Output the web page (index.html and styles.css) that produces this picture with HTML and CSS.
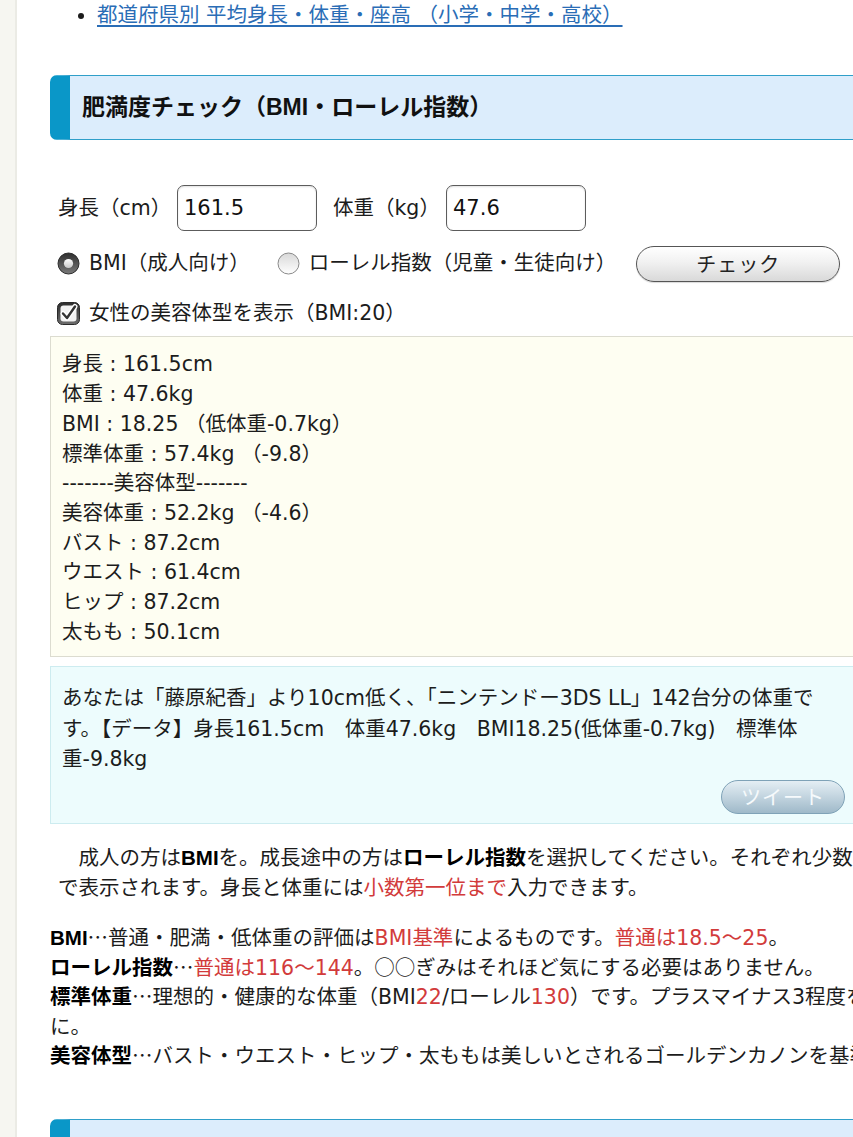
FILE: index.html
```html
<!DOCTYPE html>
<html lang="ja">
<head>
<meta charset="utf-8">
<title>肥満度チェック（BMI・ローレル指数）</title>
<link rel="stylesheet" href="styles.css">
</head>
<body>
<div class="page">
  <div class="side"></div>
  <main class="main">
    <ul class="links">
      <li><a href="#">都道府県別 平均身長・体重・座高 （小学・中学・高校）</a></li>
    </ul>

    <section class="tool">
      <h2 class="heading">肥満度チェック（BMI・ローレル指数）</h2>

      <form class="form">
        <div class="row row-inputs">
          <label class="lbl lbl-h">身長（cm）</label>
          <input class="num num-h" type="text" value="161.5">
          <label class="lbl lbl-w">体重（kg）</label>
          <input class="num" type="text" value="47.6">
        </div>
        <div class="row row-radio">
          <label class="opt opt-bmi">
            <svg class="ico" width="23" height="23" viewBox="0 0 23 23">
              <defs>
                <linearGradient id="rOn" x1="0" y1="0" x2="0" y2="1">
                  <stop offset="0" stop-color="#2e2e2e"/>
                  <stop offset="1" stop-color="#7a7a7a"/>
                </linearGradient>
                <linearGradient id="rDot" x1="0" y1="0" x2="0" y2="1">
                  <stop offset="0" stop-color="#ffffff"/>
                  <stop offset="1" stop-color="#c8c8c8"/>
                </linearGradient>
              </defs>
              <circle cx="11.5" cy="11.5" r="10.5" fill="url(#rOn)" stroke="#2a2a2a" stroke-width="1"/>
              <circle cx="11.5" cy="11.5" r="4.6" fill="url(#rDot)"/>
            </svg>
            BMI（成人向け）
          </label>
          <label class="opt opt-rohrer">
            <svg class="ico" width="23" height="23" viewBox="0 0 23 23">
              <defs>
                <linearGradient id="rOff" x1="0" y1="0" x2="0" y2="1">
                  <stop offset="0" stop-color="#d8d8d8"/>
                  <stop offset="1" stop-color="#ffffff"/>
                </linearGradient>
              </defs>
              <circle cx="11.5" cy="11.5" r="10.5" fill="url(#rOff)" stroke="#8a8a8a" stroke-width="1"/>
            </svg>
            ローレル指数（児童・生徒向け）
          </label>
          <button class="btn-check" type="button">チェック</button>
        </div>
        <div class="row row-check">
          <label class="opt">
            <svg class="ico" width="23" height="23" viewBox="0 0 23 23">
              <defs>
                <linearGradient id="cOn" x1="0" y1="0" x2="0" y2="1">
                  <stop offset="0" stop-color="#2c2c2c"/>
                  <stop offset="1" stop-color="#6e6e6e"/>
                </linearGradient>
              </defs>
              <rect x="0.5" y="0.5" width="22" height="22" rx="5" fill="url(#cOn)" stroke="#2a2a2a"/>
              <rect x="3.5" y="3.5" width="16" height="16" rx="3" fill="#f2f2f2"/>
              <path d="M6 11.5 L10 16 L18 4.5" fill="none" stroke="#ffffff" stroke-width="5" stroke-linecap="round" stroke-linejoin="round"/>
              <path d="M6 11.5 L10 16 L18 4.5" fill="none" stroke="#333333" stroke-width="2.4" stroke-linecap="round" stroke-linejoin="round"/>
            </svg>
            女性の美容体型を表示（BMI:20）
          </label>
        </div>
      </form>

      <div class="result">
        <div>身長 : 161.5cm</div>
        <div>体重 : 47.6kg</div>
        <div>BMI : 18.25 （低体重-0.7kg）</div>
        <div>標準体重 : 57.4kg （-9.8）</div>
        <div>-------美容体型-------</div>
        <div>美容体重 : 52.2kg （-4.6）</div>
        <div>バスト : 87.2cm</div>
        <div>ウエスト : 61.4cm</div>
        <div>ヒップ : 87.2cm</div>
        <div>太もも : 50.1cm</div>
      </div>

      <div class="share">
        <p class="share-text">あなたは「藤原紀香」より10cm低く、「ニンテンドー3DS LL」142台分の体重です。【データ】身長161.5cm　体重47.6kg　BMI18.25(低体重-0.7kg)　標準体重-9.8kg</p>
        <div class="share-actions">
          <button class="btn-tweet" type="button">ツイート</button>
        </div>
      </div>

      <p class="desc">　成人の方は<b>BMI</b>を。成長途中の方は<b>ローレル指数</b>を選択してください。それぞれ少数で表示されます。身長と体重には<span class="red">小数第一位まで</span>入力できます。</p>

      <div class="defs">
        <div><b>BMI</b><span class="cjk">…</span>普通・肥満・低体重の評価は<span class="red">BMI基準</span>によるものです。<span class="red">普通は18.5～25</span>。</div>
        <div><b>ローレル指数</b><span class="cjk">…</span><span class="red">普通は116～144</span>。<span class="cjk">○○</span>ぎみはそれほど気にする必要はありません。</div>
        <div><b>標準体重</b><span class="cjk">…</span>理想的・健康的な体重（BMI<span class="red">22</span>/ローレル<span class="red">130</span>）です。プラスマイナス3程度を目安に。</div>
        <div><b>美容体型</b><span class="cjk">…</span>バスト・ウエスト・ヒップ・太ももは美しいとされるゴールデンカノンを基準に。</div>
      </div>
    </section>

    <h2 class="heading heading-next">&nbsp;</h2>
  </main>
</div>
</body>
</html>
```

FILE: styles.css
```css
html {
  overflow-x: hidden;
}

body {
  margin: 0;
  background: #ffffff;
  color: #1c1c1c;
  font-family: "DejaVu Sans", "Noto Sans CJK JP", sans-serif;
  font-size: 20.5px;
  line-height: 29.7px;
  overflow-x: hidden;
}

.page {
  display: flex;
  align-items: stretch;
  min-height: 1137px;
}

.side {
  flex: 0 0 15px;
  background: #f6f6f1;
  border-right: 2px solid #ebebe5;
}

.main {
  flex: 0 0 870px;
  padding-left: 33px;
  padding-top: 1px;
}

.links {
  margin: 0;
  padding-left: 47px;
}

.links a {
  color: #2a6db6;
  text-decoration: underline;
  text-underline-offset: 3px;
}

.heading {
  margin: 44px 0 0;
  padding: 15px 12px;
  font-family: "Liberation Sans", "Noto Sans CJK JP", sans-serif;
  font-size: 23px;
  line-height: 33px;
  font-weight: bold;
  color: #111111;
  background: #dcedfc;
  border: 1px solid #2f9fc9;
  border-left: 20px solid #0a97c8;
  border-radius: 7px;
}

.form {
  margin: 45px 0 0;
  padding-left: 7px;
  width: 800px;
}

.row {
  display: flex;
  align-items: center;
}

.row-inputs {
  padding-left: 1px;
  height: 46px;
}

.lbl {
  flex: 0 0 auto;
  padding-top: 2px;
}

.lbl-h {
  width: 119px;
}

.lbl-w {
  width: 113px;
}

.num {
  box-sizing: border-box;
  width: 140px;
  height: 46px;
  margin: 0;
  padding: 0 6px;
  border: 1px solid #5c5c5c;
  border-radius: 7px;
  background: #ffffff;
  box-shadow: inset 0 1px 2px rgba(0, 0, 0, 0.12);
  font-family: "DejaVu Sans", "Noto Sans CJK JP", sans-serif;
  font-size: 21px;
  color: #111111;
}

.num-h {
  margin-right: 16px;
}

.row-radio {
  margin-top: 15px;
  height: 36px;
}

.opt {
  display: flex;
  align-items: center;
  white-space: nowrap;
}

.ico {
  flex: 0 0 auto;
  margin-right: 9px;
}

.opt-bmi {
  margin-right: 27px;
}

.opt-rohrer {
  margin-right: 20px;
}

.btn-check {
  box-sizing: border-box;
  width: 204px;
  height: 36px;
  padding: 0;
  border: 1px solid #555555;
  border-radius: 18px;
  background: linear-gradient(#ffffff, #f1f1f1 45%, #d9d9d9);
  box-shadow: 0 1px 1px rgba(0, 0, 0, 0.15);
  font-family: "Noto Sans CJK JP", sans-serif;
  font-size: 20px;
  letter-spacing: 1px;
  color: #222222;
}

.row-check {
  margin-top: 17px;
}

.result {
  box-sizing: border-box;
  width: 807px;
  margin-top: 8px;
  padding: 13px 11px 9px;
  background: #fefef2;
  border: 1px solid #dcdcd0;
}

.share {
  box-sizing: border-box;
  width: 807px;
  margin-top: 9px;
  padding: 16px 11px 9px;
  background: #edfcfd;
  border: 1px solid #cdecf0;
}

.share-text {
  margin: 0;
  padding-right: 10px;
  line-height: 30.5px;
}

.share-actions {
  display: flex;
  justify-content: flex-end;
  margin-top: 5px;
}

.btn-tweet {
  box-sizing: border-box;
  width: 124px;
  height: 34px;
  padding: 0;
  border: 1px solid #7fa2b7;
  border-radius: 17px;
  background: linear-gradient(#e4eef4, #c2d4df 50%, #9fb9c9);
  font-family: "Noto Sans CJK JP", sans-serif;
  font-size: 20px;
  color: #f6fafc;
  letter-spacing: 1px;
}

.desc {
  margin: 19px 0 0;
  padding: 0 58px 0 8px;
  line-height: 30px;
}

.red {
  color: #d23b3b;
}

.cjk {
  font-family: "Noto Sans CJK JP", sans-serif;
  line-height: 1;
}

b {
  font-family: "Liberation Sans", "Noto Sans CJK JP", sans-serif;
  line-height: 1;
  color: #000000;
}

.defs {
  margin-top: 21px;
  line-height: 29.6px;
}

.heading-next {
  margin-top: 47px;
}
```
